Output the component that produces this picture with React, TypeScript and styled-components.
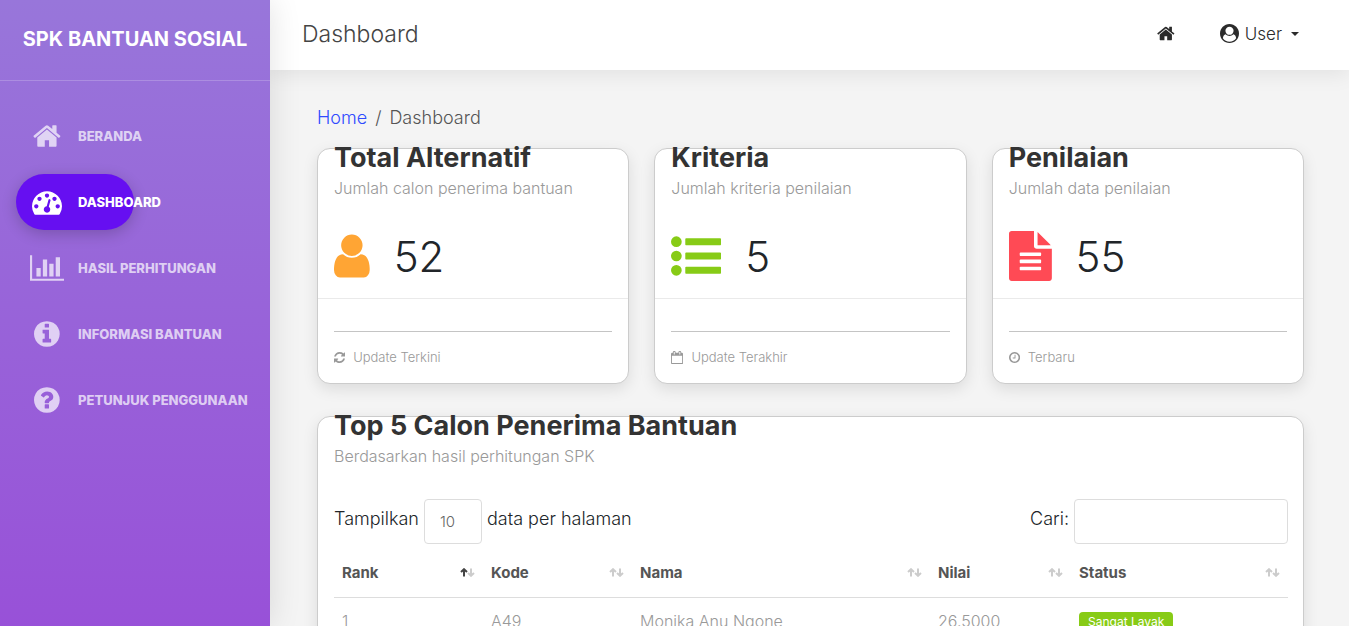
import React from 'react';
import styled, { createGlobalStyle } from 'styled-components';

const GlobalStyle = createGlobalStyle`
  * { box-sizing: border-box; }
  body {
    margin: 0;
    background: #f4f4f4;
    color: #212529;
    font-family: Inter, 'Open Sans', sans-serif;
    font-size: 18px;
    font-weight: 300;
  }
`;

/* Icons: [viewBox, path] on a 1792-unit em square */
const icons = {
  home: ['64 0 1664 1792', 'M1472 992v480q0 26-19 45t-45 19h-384v-384h-256v384h-384q-26 0-45-19t-19-45v-480q0-1 .5-3t.5-3l575-474 575 474q1 2 1 6zm223-69l-62 74q-8 9-21 11h-3q-13 0-21-7l-692-577-692 577q-12 8-24 7-13-2-21-11l-62-74q-8-10-7-23.5t11-21.5l719-599q32-26 76-26t76 26l244 204v-195q0-14 9-23t23-9h192q14 0 23 9t9 23v408l219 182q10 8 11 21.5t-7 23.5z'],
  gauge: ['0 0 1792 1792', 'M384 1152q0-53-37.5-90.5t-90.5-37.5-90.5 37.5-37.5 90.5 37.5 90.5 90.5 37.5 90.5-37.5 37.5-90.5zm192-448q0-53-37.5-90.5t-90.5-37.5-90.5 37.5-37.5 90.5 37.5 90.5 90.5 37.5 90.5-37.5 37.5-90.5zm428 481l101-382q6-26-7.5-48.5t-38.5-29.5-48 6.5-30 39.5l-101 382q-60 5-107 43.5t-63 98.5q-20 77 20 146t117 89 146-20 89-117q16-60-6-117t-72-91zm660-33q0-53-37.5-90.5t-90.5-37.5-90.5 37.5-37.5 90.5 37.5 90.5 90.5 37.5 90.5-37.5 37.5-90.5zm-640-640q0-53-37.5-90.5t-90.5-37.5-90.5 37.5-37.5 90.5 37.5 90.5 90.5 37.5 90.5-37.5 37.5-90.5zm448 192q0-53-37.5-90.5t-90.5-37.5-90.5 37.5-37.5 90.5 37.5 90.5 90.5 37.5 90.5-37.5 37.5-90.5zm320 448q0 261-141 483-19 29-54 29h-1402q-35 0-54-29-141-221-141-483 0-182 71-348t191-286 286-191 348-71 348 71 286 191 191 286 71 348z'],
  chart: ['0 0 2048 1792', 'M640 896v512h-256v-512h256zm384-512v1024h-256v-1024h256zm1024 1152v128h-2048v-1536h128v1408h1920zm-640-896v768h-256v-768h256zm384-384v1152h-256v-1152h256z'],
  info: ['128 0 1536 1792', 'M1152 1376v-160q0-14-9-23t-23-9h-96v-512q0-14-9-23t-23-9h-320q-14 0-23 9t-9 23v160q0 14 9 23t23 9h96v320h-96q-14 0-23 9t-9 23v160q0 14 9 23t23 9h448q14 0 23-9t9-23zm-128-896v-160q0-14-9-23t-23-9h-192q-14 0-23 9t-9 23v160q0 14 9 23t23 9h192q14 0 23-9t9-23zm640 416q0 209-103 385.5t-279.5 279.5-385.5 103-385.5-103-279.5-279.5-103-385.5 103-385.5 279.5-279.5 385.5-103 385.5 103 279.5 279.5 103 385.5z'],
  question: ['128 0 1536 1792', 'M1024 1376v-192q0-14-9-23t-23-9h-192q-14 0-23 9t-9 23v192q0 14 9 23t23 9h192q14 0 23-9t9-23zm256-672q0-88-55.5-163t-138.5-116-170-41q-243 0-371 213-15 24 8 42l132 100q7 6 19 6 16 0 25-12 53-68 86-92 34-24 86-24 48 0 85.5 26t37.5 59q0 38-20 61t-68 45q-63 28-115.5 86.5t-52.5 125.5v36q0 14 9 23t23 9h192q14 0 23-9t9-23q0-19 21.5-49.5t54.5-49.5q32-18 49-28.5t46-35 44.5-48 28-60.5 12.5-81zm384 192q0 209-103 385.5t-279.5 279.5-385.5 103-385.5-103-279.5-279.5-103-385.5 103-385.5 279.5-279.5 385.5-103 385.5 103 279.5 279.5 103 385.5z'],
  account: ['0 0 1792 1792', 'M1523 1339q-22-155-87.5-257.5t-184.5-118.5q-67 74-159.5 115.5t-195.5 41.5-195.5-41.5-159.5-115.5q-119 16-184.5 118.5t-87.5 257.5q106 150 271 237.5t356 87.5 356-87.5 271-237.5zm-243-699q0-159-112.5-271.5t-271.5-112.5-271.5 112.5-112.5 271.5 112.5 271.5 271.5 112.5 271.5-112.5 112.5-271.5zm512 256q0 182-71 347.5t-190.5 286-285.5 191.5-349 71-349-71-285.5-191.5-190.5-286-71-347.5 71-348 191-286 286-191 348-71 348 71 286 191 191 286 71 348z'],
  person: ['256 0 1280 1792', 'M1536 1399q0 109-62.5 187t-150.5 78h-854q-88 0-150.5-78t-62.5-187q0-85 8.5-160.5t31.5-152 58.5-131 94-89 134.5-34.5q131 128 313 128t313-128q76 0 134.5 34.5t94 89 58.5 131 31.5 152 8.5 160.5zm-256-887q0 159-112.5 271.5t-271.5 112.5-271.5-112.5-112.5-271.5 112.5-271.5 271.5-112.5 271.5 112.5 112.5 271.5z'],
  list: ['0 0 1792 1792', 'M384 1408q0 80-56 136t-136 56-136-56-56-136 56-136 136-56 136 56 56 136zm0-512q0 80-56 136t-136 56-136-56-56-136 56-136 136-56 136 56 56 136zm1408 416v192q0 13-9.5 22.5t-22.5 9.5h-1216q-13 0-22.5-9.5t-9.5-22.5v-192q0-13 9.5-22.5t22.5-9.5h1216q13 0 22.5 9.5t9.5 22.5zm-1408-928q0 80-56 136t-136 56-136-56-56-136 56-136 136-56 136 56 56 136zm1408 416v192q0 13-9.5 22.5t-22.5 9.5h-1216q-13 0-22.5-9.5t-9.5-22.5v-192q0-13 9.5-22.5t22.5-9.5h1216q13 0 22.5 9.5t9.5 22.5zm0-512v192q0 13-9.5 22.5t-22.5 9.5h-1216q-13 0-22.5-9.5t-9.5-22.5v-192q0-13 9.5-22.5t22.5-9.5h1216q13 0 22.5 9.5t9.5 22.5z'],
  file: ['128 0 1536 1792', 'M1596 476q14 14 28 36h-472v-472q22 14 36 28zm-476 164h544v1056q0 40-28 68t-68 28h-1344q-40 0-68-28t-28-68v-1600q0-40 28-68t68-28h800v544q0 40 28 68t68 28zm160 736v-64q0-14-9-23t-23-9h-704q-14 0-23 9t-9 23v64q0 14 9 23t23 9h704q14 0 23-9t9-23zm0-256v-64q0-14-9-23t-23-9h-704q-14 0-23 9t-9 23v64q0 14 9 23t23 9h704q14 0 23-9t9-23zm0-256v-64q0-14-9-23t-23-9h-704q-14 0-23 9t-9 23v64q0 14 9 23t23 9h704q14 0 23-9t9-23z'],
  refresh: ['128 0 1536 1792', 'M1639 1056q0 5-1 7-64 268-268 434.5t-478 166.5q-146 0-282.5-55t-243.5-157l-129 129q-19 19-45 19t-45-19-19-45v-448q0-26 19-45t45-19h448q26 0 45 19t19 45-19 45l-137 137q71 66 161 102t187 36q134 0 250-65t186-179q11-17 53-117 8-23 30-23h192q13 0 22.5 9.5t9.5 22.5zm25-800v448q0 26-19 45t-45 19h-448q-26 0-45-19t-19-45 19-45l138-138q-148-137-349-137-134 0-250 65t-186 179q-11 17-53 117-8 23-30 23h-199q-13 0-22.5-9.5t-9.5-22.5v-7q65-268 270-434.5t480-166.5q146 0 284 55.5t245 156.5l130-129q19-19 45-19t45 19 19 45z'],
  calendar: ['64 0 1664 1792', 'M192 1664h1408v-1024h-1408v1024zm384-1216v-288q0-14-9-23t-23-9h-64q-14 0-23 9t-9 23v288q0 14 9 23t23 9h64q14 0 23-9t9-23zm768 0v-288q0-14-9-23t-23-9h-64q-14 0-23 9t-9 23v288q0 14 9 23t23 9h64q14 0 23-9t9-23zm384-64v1280q0 52-38 90t-90 38h-1408q-52 0-90-38t-38-90v-1280q0-52 38-90t90-38h128v-96q0-66 47-113t113-47h64q66 0 113 47t47 113v96h384v-96q0-66 47-113t113-47h64q66 0 113 47t47 113v96h128q52 0 90 38t38 90z'],
  clock: ['128 0 1536 1792', 'M1024 544v448q0 14-9 23t-23 9h-320q-14 0-23-9t-9-23v-64q0-14 9-23t23-9h224v-352q0-14 9-23t23-9h64q14 0 23 9t9 23zm416 352q0-148-73-273t-198-198-273-73-273 73-198 198-73 273 73 273 198 198 273 73 273-73 198-198 73-273zm224 0q0 209-103 385.5t-279.5 279.5-385.5 103-385.5-103-279.5-279.5-103-385.5 103-385.5 279.5-279.5 385.5-103 385.5 103 279.5 279.5 103 385.5z'],
} as const;

type IconName = keyof typeof icons;

const Svg = styled.svg<{ $size: number }>`
  display: block;
  flex: none;
  height: ${(p) => p.$size}px;
  width: auto;
  fill: currentColor;
`;

const Icon = ({ name, size }: { name: IconName; size: number }) => (
  <Svg $size={size} viewBox={icons[name][0]} aria-hidden="true">
    <path d={icons[name][1]} />
  </Svg>
);

const Shell = styled.div`
  display: flex;
  height: 100vh;
`;

const Sidebar = styled.aside`
  flex: none;
  width: 270px;
  background: linear-gradient(#9876da, #9851d8);
  color: #fff;
  box-shadow: 0 0 30px rgba(0, 0, 0, 0.12);
  z-index: 2;
`;

const Brand = styled.div`
  display: flex;
  align-items: center;
  justify-content: center;
  height: 81px;
  padding-bottom: 3px;
  border-bottom: 1px solid rgba(255, 255, 255, 0.2);
  font-size: 20px;
  font-weight: 700;
  white-space: nowrap;
`;

const Nav = styled.nav`
  display: flex;
  flex-direction: column;
  gap: 10px;
  padding: 27px 16px;
`;

const NavLink = styled.a<{ $active?: boolean }>`
  display: flex;
  align-items: center;
  gap: 16px;
  width: 118px;
  height: 56px;
  padding-left: 16px;
  border-radius: 28px;
  color: ${(p) => (p.$active ? '#fff' : 'rgba(255, 255, 255, 0.7)')};
  background: ${(p) => (p.$active ? '#660ff1' : 'transparent')};
  box-shadow: ${(p) => (p.$active ? '0 4px 15px rgba(0, 0, 0, 0.2)' : 'none')};
  font-size: 13px;
  font-weight: 800;
  text-decoration: none;
  white-space: nowrap;
`;

const NavIcon = styled.span`
  display: flex;
  justify-content: center;
  flex: none;
  width: 30px;
`;

const Main = styled.main`
  flex: 1;
  min-width: 0;
  display: flex;
  flex-direction: column;
`;

const Topbar = styled.header`
  flex: none;
  display: flex;
  align-items: center;
  height: 70px;
  padding: 0 50px 3px 32px;
  background: #fff;
  box-shadow: 0 4px 20px rgba(0, 0, 0, 0.08);
  z-index: 1;
`;

const PageTitle = styled.h1`
  margin: 0;
  flex: 1;
  color: #444;
  font-size: 23px;
  font-weight: 300;
`;

const HomeLink = styled.a`
  display: flex;
  margin-right: 45px;
  color: #2b2b2b;
`;

const UserButton = styled.button`
  display: flex;
  align-items: center;
  gap: 6px;
  padding: 0;
  border: 0;
  background: none;
  color: #2b2b2b;
  font: inherit;
  font-size: 17px;
`;

const Caret = styled.span`
  margin-left: 3px;
  border: 4px solid transparent;
  border-top-color: currentColor;
  border-bottom: 0;
`;

const Content = styled.div`
  flex: 1;
  min-height: 0;
  overflow-y: auto;
  scrollbar-width: none;
  padding: 36px 45px 32px 47px;
`;

const Breadcrumb = styled.nav`
  display: flex;
  gap: 8px;
  margin-bottom: 18px;
  line-height: 24px;
  color: #555;
  a {
    color: #2f4bff;
    text-decoration: none;
  }
`;

const StatGrid = styled.div`
  display: grid;
  grid-template-columns: repeat(3, 1fr);
  gap: 25px;
  margin-bottom: 32px;
`;

const Card = styled.section`
  border: 1px solid #ccc;
  border-radius: 13px;
  background: #fff;
  box-shadow: 0 5px 15px rgba(0, 0, 0, 0.1);
`;

const CardHead = styled.div`
  padding: 0 16px;
`;

const CardTitle = styled.h2`
  margin: -6px 0 5px;
  color: #333;
  font-size: 27px;
  font-weight: 700;
  line-height: 30px;
`;

const CardNote = styled.p`
  margin: 0;
  color: #999;
  font-size: 16px;
  line-height: 20px;
`;

const Value = styled.div`
  display: flex;
  align-items: center;
  gap: 24px;
  height: 101px;
  padding: 16px 16px 0;
  border-bottom: 1px solid #eaeaea;
  font-size: 42px;
`;

const ValueIcon = styled.span<{ $color: string }>`
  display: flex;
  color: ${(p) => p.$color};
`;

const CardFoot = styled.footer`
  margin: 32px 16px 0;
  padding: 15px 0 16px;
  display: flex;
  align-items: center;
  gap: 8px;
  border-top: 1px solid #c4c4c4;
  color: #999;
  font-size: 13px;
  line-height: 20px;
`;

const Controls = styled.div`
  display: flex;
  justify-content: space-between;
  padding: 33px 15px 0 16px;
`;

const Control = styled.label`
  display: flex;
  align-items: flex-start;
  gap: 5px;
  line-height: 40px;
`;

const Select = styled.select`
  appearance: none;
  width: 58px;
  height: 45px;
  padding: 0 15px;
  border: 1px solid #ddd;
  border-radius: 4px;
  background: #fff;
  color: #666;
  font: inherit;
  font-size: 15px;
`;

const Search = styled.input`
  width: 214px;
  height: 45px;
  padding: 0 15px;
  border: 1px solid #ddd;
  border-radius: 4px;
  background: #fff;
  font: inherit;
`;

const TableWrap = styled.div`
  padding: 4px 16px 32px;
`;

const Table = styled.table`
  width: 100%;
  table-layout: fixed;
  border-collapse: collapse;
  font-size: 16px;
`;

const Th = styled.th`
  height: 49px;
  padding: 0 8px;
  border-bottom: 1px solid #ddd;
  color: #555;
  font-size: 15px;
  font-weight: 700;
  text-align: left;
`;

const ThInner = styled.span`
  display: flex;
  align-items: center;
  justify-content: space-between;
`;

const Td = styled.td`
  height: 47px;
  padding: 0 8px;
  color: #999;
`;

const Badge = styled.span`
  display: inline-block;
  padding: 0 9px;
  border-radius: 4px;
  background: #87cb16;
  color: #fff;
  font-size: 12px;
  font-weight: 400;
  line-height: 20px;
`;

const SortSvg = styled.svg`
  flex: none;
  width: 15px;
  height: 9px;
  fill: none;
  stroke-width: 2;
`;

const Sort = ({ ascending }: { ascending?: boolean }) => (
  <SortSvg viewBox="0 0 15 9" aria-hidden="true">
    <path d="M4 8.5V1.5M1 4L4 1.2L7 4" stroke={ascending ? '#444' : '#ccc'} />
    <path d="M11 .5V7.5M8 5L11 7.8L14 5" stroke="#ccc" />
  </SortSvg>
);

const navItems: { icon: IconName; label: string; active?: boolean }[] = [
  { icon: 'home', label: 'BERANDA' },
  { icon: 'gauge', label: 'DASHBOARD', active: true },
  { icon: 'chart', label: 'HASIL PERHITUNGAN' },
  { icon: 'info', label: 'INFORMASI BANTUAN' },
  { icon: 'question', label: 'PETUNJUK PENGGUNAAN' },
];

const stats: { title: string; note: string; icon: IconName; color: string; value: number; footIcon: IconName; foot: string }[] = [
  { title: 'Total Alternatif', note: 'Jumlah calon penerima bantuan', icon: 'person', color: '#ffa534', value: 52, footIcon: 'refresh', foot: 'Update Terkini' },
  { title: 'Kriteria', note: 'Jumlah kriteria penilaian', icon: 'list', color: '#87cb16', value: 5, footIcon: 'calendar', foot: 'Update Terakhir' },
  { title: 'Penilaian', note: 'Jumlah data penilaian', icon: 'file', color: '#ff4a55', value: 55, footIcon: 'clock', foot: 'Terbaru' },
];

const columns = [
  { label: 'Rank', width: 149 },
  { label: 'Kode', width: 149 },
  { label: 'Nama', width: 298 },
  { label: 'Nilai', width: 141 },
  { label: 'Status', width: 217 },
];

export default function App() {
  return (
    <>
      <GlobalStyle />
      <Shell>
        <Sidebar>
          <Brand>SPK BANTUAN SOSIAL</Brand>
          <Nav>
            {navItems.map((item) => (
              <NavLink key={item.label} href="#" $active={item.active}>
                <NavIcon><Icon name={item.icon} size={30} /></NavIcon>
                {item.label}
              </NavLink>
            ))}
          </Nav>
        </Sidebar>
        <Main>
          <Topbar>
            <PageTitle>Dashboard</PageTitle>
            <HomeLink href="#" aria-label="Home"><Icon name="home" size={19} /></HomeLink>
            <UserButton type="button">
              <Icon name="account" size={19} />
              User
              <Caret />
            </UserButton>
          </Topbar>
          <Content>
            <Breadcrumb aria-label="Breadcrumb">
              <a href="#">Home</a>
              <span>/</span>
              <span>Dashboard</span>
            </Breadcrumb>
            <StatGrid>
              {stats.map((s) => (
                <Card key={s.title}>
                  <CardHead>
                    <CardTitle>{s.title}</CardTitle>
                    <CardNote>{s.note}</CardNote>
                  </CardHead>
                  <Value>
                    <ValueIcon $color={s.color}><Icon name={s.icon} size={50} /></ValueIcon>
                    {s.value}
                  </Value>
                  <CardFoot>
                    <Icon name={s.footIcon} size={13} />
                    {s.foot}
                  </CardFoot>
                </Card>
              ))}
            </StatGrid>
            <Card>
              <CardHead>
                <CardTitle>Top 5 Calon Penerima Bantuan</CardTitle>
                <CardNote>Berdasarkan hasil perhitungan SPK</CardNote>
              </CardHead>
              <Controls>
                <Control>
                  Tampilkan
                  <Select defaultValue="10"><option>10</option></Select>
                  data per halaman
                </Control>
                <Control>
                  Cari:
                  <Search type="search" />
                </Control>
              </Controls>
              <TableWrap>
                <Table>
                  <colgroup>
                    {columns.map((c) => <col key={c.label} width={c.width} />)}
                  </colgroup>
                  <thead>
                    <tr>
                      {columns.map((c, i) => (
                        <Th key={c.label} scope="col">
                          <ThInner>{c.label}<Sort ascending={i === 0} /></ThInner>
                        </Th>
                      ))}
                    </tr>
                  </thead>
                  <tbody>
                    <tr>
                      <Td>1</Td>
                      <Td>A49</Td>
                      <Td>Monika Anu Ngone</Td>
                      <Td>26.5000</Td>
                      <Td><Badge>Sangat Layak</Badge></Td>
                    </tr>
                  </tbody>
                </Table>
              </TableWrap>
            </Card>
          </Content>
        </Main>
      </Shell>
    </>
  );
}
